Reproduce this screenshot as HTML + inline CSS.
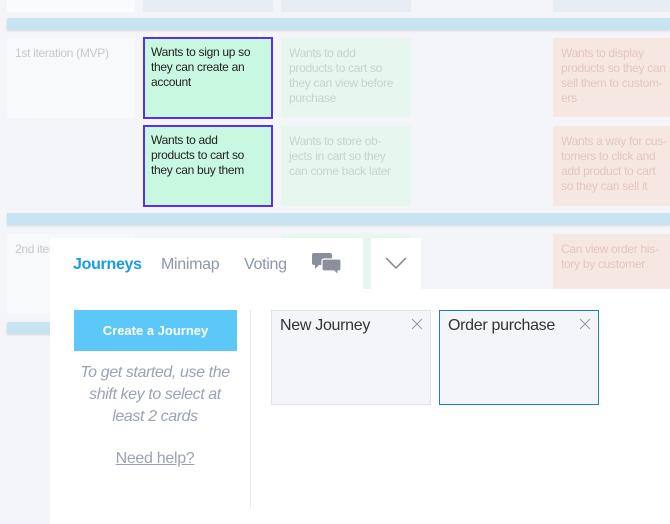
<!DOCTYPE html>
<html><head><style>
*{margin:0;padding:0;box-sizing:border-box}
body{width:670px;height:524px;overflow:hidden;background:#f3f5f9;font-family:"Liberation Sans",sans-serif;position:relative}
.a{position:absolute}
.bar{background:#c8e4f2;height:12px;left:7px;right:0;box-shadow:0 1px 2px rgba(0,0,0,.12)}
.c{position:absolute;font-size:12px;line-height:15px;padding:8px;overflow:hidden;letter-spacing:-.3px;white-space:nowrap}
.fg{background:#e7f6ef;color:#c3d6cd}
.fr{background:#f7e7e3;color:#e4c5bf}
.sel{background:#c8f8e0;border:2px solid #5b2ef0;color:#222;padding:6px}
.tab{position:absolute;top:256px;font-size:16px;color:#8b97aa;letter-spacing:-.3px}
.jc{position:absolute;top:310px;width:160px;height:95px;background:#f4f5f9;font-size:16px;color:#333;padding:6px 8px;letter-spacing:-.3px}
.x{position:absolute;right:8px;top:8px}
</style></head><body>
<div class="a" style="left:7px;top:0;width:128px;height:12px;background:#fafbfc"></div>
<div class="a" style="left:143px;top:0;width:130px;height:12px;background:#e8edf4"></div>
<div class="a" style="left:281px;top:0;width:130px;height:12px;background:#e8edf4"></div>
<div class="a" style="left:553px;top:0;width:117px;height:12px;background:#e8edf4"></div>
<div class="a bar" style="top:18px"></div>
<div class="a bar" style="top:213px"></div>
<div class="a bar" style="top:322px"></div>
<div class="c" style="left:7px;top:38px;width:128px;height:80px;background:#f8f9fb;color:#c5c9d0">1st iteration (MVP)</div>
<div class="c sel" style="left:143px;top:37px;width:130px;height:82px">Wants to sign up so<br>they can create an<br>account</div>
<div class="c fg" style="left:281px;top:38px;width:130px;height:79px">Wants to add<br>products to cart so<br>they can view before<br>purchase</div>
<div class="c fr" style="left:553px;top:38px;width:117px;height:79px">Wants to display<br>products so they can<br>sell them to custom-<br>ers</div>
<div class="c sel" style="left:143px;top:125px;width:130px;height:82px">Wants to add<br>products to cart so<br>they can buy them</div>
<div class="c fg" style="left:281px;top:126px;width:130px;height:80px">Wants to store ob-<br>jects in cart so they<br>can come back later</div>
<div class="c fr" style="left:553px;top:126px;width:117px;height:80px">Wants a way for cus-<br>tomers to click and<br>add product to cart<br>so they can sell it</div>
<div class="c" style="left:7px;top:234px;width:128px;height:80px;background:#f8f9fb;color:#c5c9d0">2nd iteration</div>
<div class="a" style="left:281px;top:234px;width:130px;height:56px;background:#e7f6ef"></div>
<div class="c fr" style="left:553px;top:234px;width:117px;height:55px">Can view order his-<br>tory by customer</div>
<div class="a" style="left:50px;top:238px;width:313px;height:52px;background:#fff"></div>
<div class="a" style="left:371px;top:238px;width:50px;height:52px;background:#fff"></div>
<div class="a" style="left:50px;top:289px;width:620px;height:235px;background:#fff"></div>
<div class="tab" style="left:73px;color:#1a9be6;font-weight:bold">Journeys</div>
<div class="tab" style="left:161px">Minimap</div>
<div class="tab" style="left:244px">Voting</div>
<svg class="a" style="left:312px;top:252px" width="30" height="24" viewBox="0 0 30 24"><path d="M2 1h16a2 2 0 0 1 2 2v8a2 2 0 0 1-2 2H7l-4 4v-4H2a2 2 0 0 1-2-2V3a2 2 0 0 1 2-2z" fill="#8a909b"/><path d="M12 7h15a2 2 0 0 1 2 2v8a2 2 0 0 1-2 2h-1v4l-4-4H12a2 2 0 0 1-2-2V9a2 2 0 0 1 2-2z" fill="#8a909b" stroke="#fff" stroke-width="1.2"/></svg>
<svg class="a" style="left:384px;top:256px" width="24" height="14"><path d="M2 2l10 10 10-10" fill="none" stroke="#8a909b" stroke-width="1.6"/></svg>
<div class="a" style="left:74px;top:310px;width:163px;height:41px;background:#5bc8f7;color:#fff;font-weight:bold;font-size:13px;text-align:center;line-height:41px">Create a Journey</div>
<div class="a" style="left:62px;top:362px;width:186px;text-align:center;font-size:16px;line-height:22px;font-style:italic;color:#9aa3b4;letter-spacing:-.4px;white-space:nowrap">To get started, use the<br>shift key to select at<br>least 2 cards</div>
<div class="a" style="left:72px;top:450px;width:166px;text-align:center;font-size:16px;color:#9aa3b4;text-decoration:underline;letter-spacing:-.3px">Need help?</div>
<div class="a" style="left:250px;top:310px;width:1px;height:198px;background:#e6e8ec"></div>
<div class="jc" style="left:271px;border:1px solid #e0e3e8">New Journey<svg class="x" width="10" height="10"><path d="M0 0L10 10M10 0L0 10" stroke="#999" stroke-width="1"/></svg></div>
<div class="jc" style="left:439px;border:1px solid #1a7fd0">Order purchase<svg class="x" width="10" height="10"><path d="M0 0L10 10M10 0L0 10" stroke="#999" stroke-width="1"/></svg></div>
</body></html>
